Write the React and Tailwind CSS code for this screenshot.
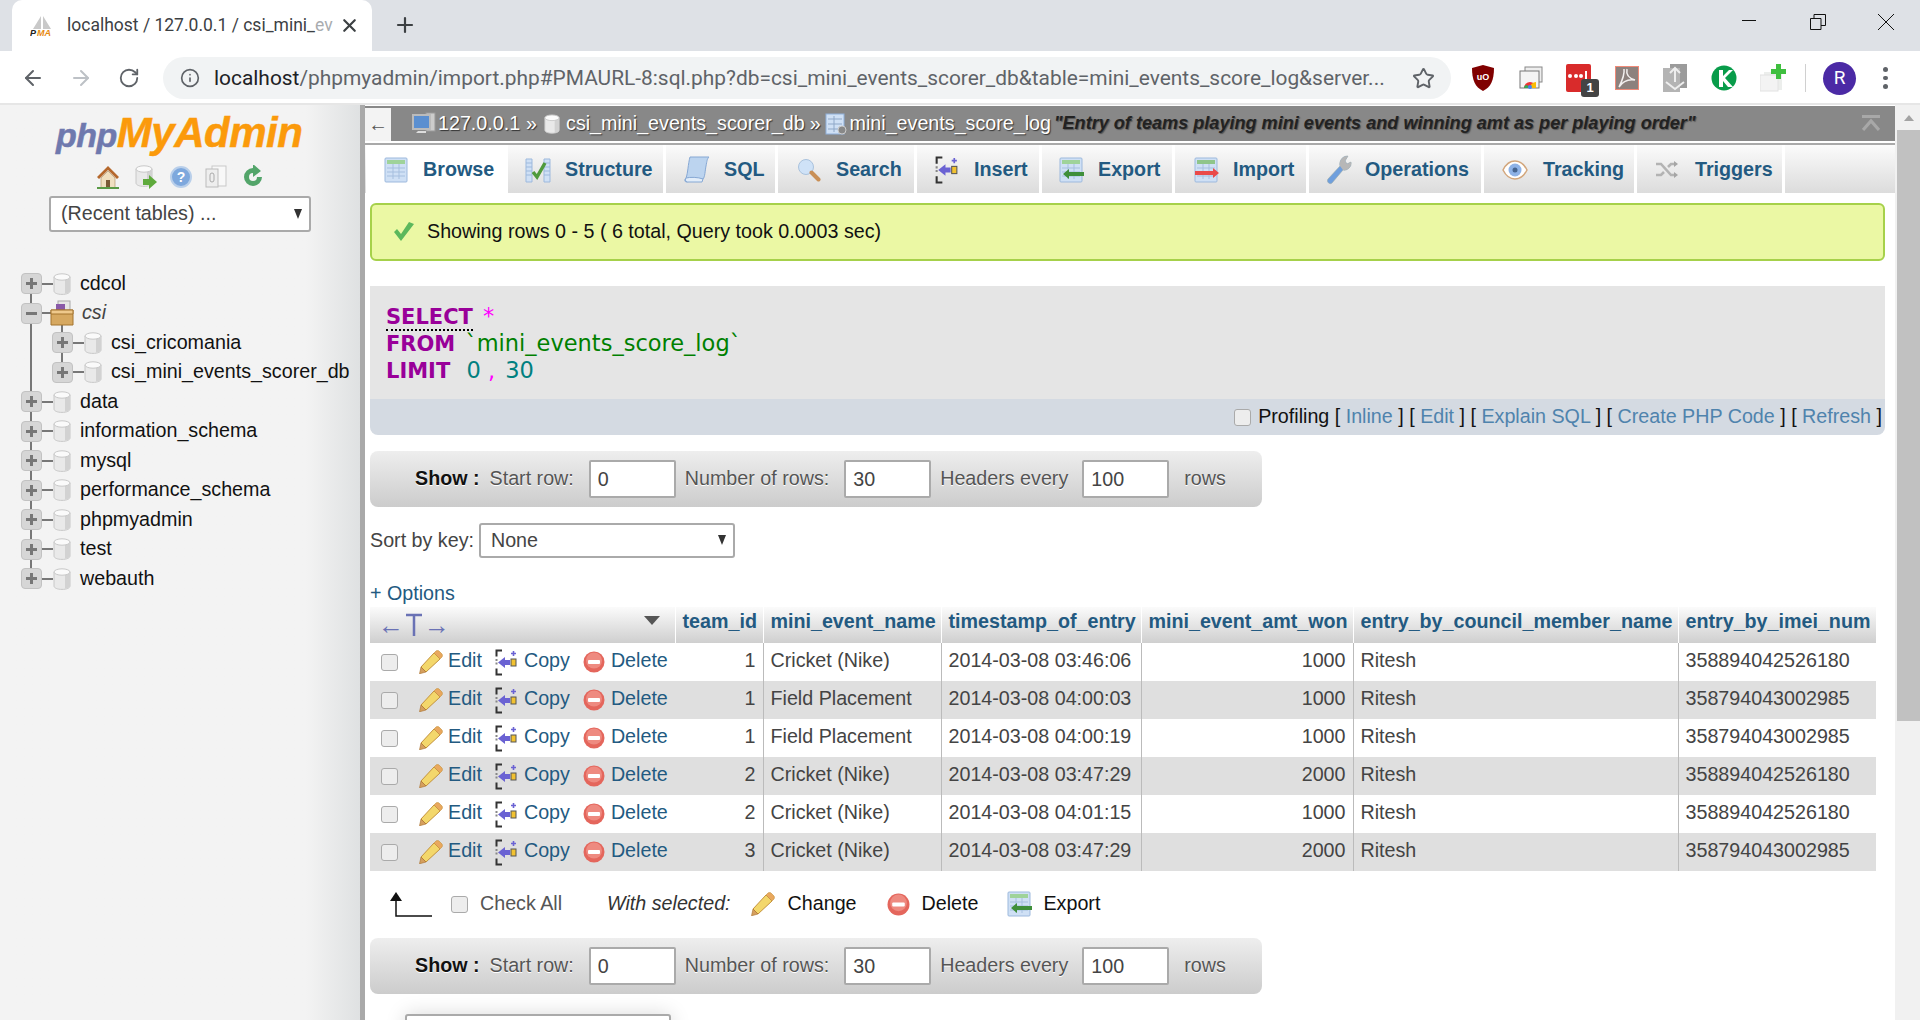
import { ArrowLeft, ArrowRight, RotateCw, Info, Star, X, Plus } from 'lucide-react'

const FONT = "font-['Liberation_Sans',Arial,sans-serif]"

const tabs = [
  { label: 'Browse', w: 'w-[142px]', pl: 'pl-[18px]', gap: 'gap-[13px]', icon: 'table', active: true },
  { label: 'Structure', w: 'w-[158px]', pl: 'pl-[17px]', gap: 'gap-[14px]', icon: 'structure' },
  { label: 'SQL', w: 'w-[112px]', pl: 'pl-[18px]', gap: 'gap-[14px]', icon: 'sql' },
  { label: 'Search', w: 'w-[139px]', pl: 'pl-[19px]', gap: 'gap-[15px]', icon: 'search' },
  { label: 'Insert', w: 'w-[125px]', pl: 'pl-[17px]', gap: 'gap-[15px]', icon: 'insert' },
  { label: 'Export', w: 'w-[133px]', pl: 'pl-[17px]', gap: 'gap-[13px]', icon: 'export' },
  { label: 'Import', w: 'w-[134px]', pl: 'pl-[19px]', gap: 'gap-[13px]', icon: 'import' },
  { label: 'Operations', w: 'w-[175px]', pl: 'pl-[17px]', gap: 'gap-[13px]', icon: 'wrench' },
  { label: 'Tracking', w: 'w-[153px]', pl: 'pl-[18px]', gap: 'gap-[15px]', icon: 'eye' },
  { label: 'Triggers', w: 'w-[148px]', pl: 'pl-[18px]', gap: 'gap-[16px]', icon: 'shuffle' },
]

const databases = [
  { name: 'cdcol' },
  { name: 'csi', open: true },
  { name: 'csi_cricomania', child: true },
  { name: 'csi_mini_events_scorer_db', child: true, last: true },
  { name: 'data' },
  { name: 'information_schema' },
  { name: 'mysql' },
  { name: 'performance_schema' },
  { name: 'phpmyadmin' },
  { name: 'test' },
  { name: 'webauth', end: true },
]

const rows = [
  [1, 'Cricket (Nike)', '2014-03-08 03:46:06', 1000, 'Ritesh', '358894042526180'],
  [1, 'Field Placement', '2014-03-08 04:00:03', 1000, 'Ritesh', '358794043002985'],
  [1, 'Field Placement', '2014-03-08 04:00:19', 1000, 'Ritesh', '358794043002985'],
  [2, 'Cricket (Nike)', '2014-03-08 03:47:29', 2000, 'Ritesh', '358894042526180'],
  [2, 'Cricket (Nike)', '2014-03-08 04:01:15', 1000, 'Ritesh', '358894042526180'],
  [3, 'Cricket (Nike)', '2014-03-08 03:47:29', 2000, 'Ritesh', '358794043002985'],
]

function Db({ className = 'w-[18px] h-[22px]' }) {
  return (
    <svg viewBox="0 0 18 22" className={className}>
      <path d="M1 4v14c0 2 3.5 3.4 8 3.4s8-1.4 8-3.4V4z" fill="#e9e9e9" stroke="#c8c8c8" />
      <path d="M12 6v14.6c3-.4 5-1.4 5-2.6V5z" fill="#d2d2d2" />
      <ellipse cx="9" cy="4" rx="8" ry="3.2" fill="#fafafa" stroke="#c8c8c8" />
    </svg>
  )
}

function Pencil({ className = 'w-[24px] h-[24px]' }) {
  return (
    <svg viewBox="0 0 24 24" className={className}>
      <path d="M2 17 15 3l6 6L7 22z" fill="#f3d76b" stroke="#c4923c" />
      <path d="M15 3l2-2c1-.6 2-.6 3 0l3 3c.6 1 .6 2 0 3l-2 2z" fill="#e9a85e" stroke="#c4923c" strokeWidth=".6" />
      <path d="M2 17l5 5-6.500 1.800z" fill="#d59f5e" stroke="#a86f2b" strokeWidth=".6" />
    </svg>
  )
}

function Insert({ className = 'w-[22px] h-[27px]' }) {
  return (
    <svg viewBox="0 0 22 27" className={className}>
      <path d="M7 1.500H1.500v6M1.500 19.500v6H7" fill="none" stroke="#333" strokeWidth="2" />
      <path d="M1.500 10v7" stroke="#888" strokeWidth="2" strokeDasharray="2 1.500" />
      <path d="M3 13.500 10 8v3h5v5h-5v3z" fill="#6a62d3" />
      <rect x="16" y="10" width="5" height="7" fill="#f2c230" stroke="#555" />
      <path d="M18.500 2v5M16 4.500h5" stroke="#6a62d3" strokeWidth="1.600" />
    </svg>
  )
}

function DeleteIcon({ className = 'w-[22px] h-[22px]' }) {
  return (
    <svg viewBox="0 0 22 22" className={className}>
      <circle cx="11" cy="11" r="10.500" fill="#e4665c" />
      <circle cx="11" cy="9.500" r="8" fill="#ee8a80" />
      <rect x="5" y="9" width="12" height="4" rx="1" fill="#fff" />
    </svg>
  )
}

function TableIcon({ arrow }) {
  return (
    <svg viewBox="0 0 26 26" className="h-[26px] w-[26px] shrink-0">
      <rect x="1" y="1" width="22" height="24" rx="1" fill="#cfe0f5" stroke="#9db9dd" />
      <rect x="3" y="3" width="18" height="4" fill={arrow === 'red' ? '#8fc58a' : '#9fd39a'} />
      <path d="M3 11h18M3 15h18M3 19h18M9 7v15M15 7v15" stroke="#a6bfdf" />
      {arrow === 'green' && <path d="M4 17 10 12v3h15v4H10v3z" fill="#3f8f3a" />}
      {arrow === 'red' && <path d="M1 14h18v-3l6 5-6 5v-3H1z" fill="#ea4a4a" />}
    </svg>
  )
}

function TabIcon({ name }) {
  if (name === 'table') return <TableIcon />
  if (name === 'export') return <TableIcon arrow="green" />
  if (name === 'import') return <TableIcon arrow="red" />
  if (name === 'insert') return <Insert className="h-[28px] w-[25px] shrink-0" />
  if (name === 'structure') {
    return (
      <svg viewBox="0 0 26 26" className="h-[26px] w-[26px] shrink-0">
        <path d="M1 2h6v23H1zM19 2h6v23h-6z" fill="#cfe0f5" stroke="#9db9dd" />
        <path d="M1 6h6M1 10h6M1 14h6M1 18h6M19 6h6M19 10h6M19 14h6M19 18h6" stroke="#9db9dd" />
        <path d="m8 15 4 5 8-14" fill="none" stroke="#4f9a3c" strokeWidth="3.500" />
      </svg>
    )
  }
  if (name === 'sql') {
    return (
      <svg viewBox="0 0 26 28" className="h-[28px] w-[26px] shrink-0">
        <path d="M6 1h19c-2 2-2 4-3 9s-1 11-3 13l-17 3c-2-1-1-3 0-4 2-5 2-14 4-21z" fill="#bcd4ef" stroke="#86a8d4" />
        <path d="M2 22c4-1 12-1 17 1l-1 3H3c-2-1-2-3-1-4z" fill="#e2edf9" stroke="#86a8d4" />
      </svg>
    )
  }
  if (name === 'search') {
    return (
      <svg viewBox="0 0 24 24" className="h-[24px] w-[24px] shrink-0">
        <circle cx="9" cy="9" r="7.500" fill="#cfe2f7" stroke="#a9c2dd" />
        <path d="m14.500 14.500 7 7" stroke="#c98f55" strokeWidth="4" strokeLinecap="round" />
      </svg>
    )
  }
  if (name === 'wrench') {
    return (
      <svg viewBox="0 0 26 30" className="h-[30px] w-[26px] shrink-0">
        <path d="M2 24 14 11c-1-5 2-10 8-10l-3 5 2 3 4-2c1 5-4 9-8 8L6 28c-2 2-6-1-4-4z" fill="#6f9fdd" stroke="#9aa" strokeWidth=".6" />
        <path d="M14 11c-1-5 2-10 8-10l-3 5 2 3 4-2c1 5-4 9-8 8z" fill="#b7b7b7" />
      </svg>
    )
  }
  if (name === 'eye') {
    return (
      <svg viewBox="0 0 26 22" className="h-[22px] w-[26px] shrink-0">
        <path d="M1 11c3-6 7-9 12-9s9 3 12 9c-3 6-7 9-12 9S4 17 1 11z" fill="#fff" stroke="#d2a67c" strokeWidth="1.500" />
        <circle cx="13" cy="11" r="6.500" fill="#8eb2e6" />
        <circle cx="13" cy="11" r="2.500" fill="#45648f" />
      </svg>
    )
  }
  return (
    <svg viewBox="0 0 24 20" className="h-[20px] w-[24px] shrink-0">
      <path d="M1 4h5l10 11h4M1 15h5l3-3M13 7l3-3h4" fill="none" stroke="#b3b3b3" strokeWidth="2.600" />
      <path d="m19 1 4 3-4 3zM19 12l4 3-4 3z" fill="#a5a5a5" />
    </svg>
  )
}

function Check() {
  return <input type="checkbox" className="h-[17px] w-[17px] shrink-0 appearance-none rounded-[3px] border border-[#aaa] bg-[#ededed]" />
}

function TreeToggle({ open }) {
  return (
    <span className="relative z-10 flex h-[21px] w-[21px] shrink-0 items-center justify-center rounded-[4px] border border-[#c2c2c2] bg-[#d6d6d6]">
      <span className="absolute h-[3px] w-[11px] bg-[#777]" />
      {!open && <span className="absolute h-[11px] w-[3px] bg-[#777]" />}
    </span>
  )
}

function TreeRow({ db }) {
  return (
    <li className="relative flex h-[29.5px] items-center text-[19.7px] text-[#111]">
      {!db.end && <span className="absolute left-[30px] top-[14px] h-[30px] w-[2px] bg-[#777]" />}
      {db.child && !db.last && <span className="absolute left-[61px] top-[14px] h-[30px] w-[2px] bg-[#777]" />}
      {db.child && <span className="absolute -top-[14px] left-[61px] h-[20px] w-[2px] bg-[#777]" />}
      <span className={`flex items-center ${db.child ? 'pl-[52px]' : 'pl-[21px]'}`}>
        <TreeToggle open={db.open} />
        <span className="h-[2px] w-[11px] bg-[#777]" />
        {db.open ? (
          <svg viewBox="0 0 24 26" className="z-10 -ml-[3px] h-[26px] w-[24px]">
            <rect x="8" y="1" width="12" height="11" fill="#e6e6e6" stroke="#aaa" />
            <path d="M6 4h9v8H6z" fill="#8a5aa8" />
            <path d="M1 10h22v15H1z" fill="#d6a860" stroke="#a4742f" />
            <path d="M1 10h22v4H1z" fill="#efc98c" stroke="#a4742f" />
          </svg>
        ) : (
          <Db />
        )}
      </span>
      <span className={`${db.open ? 'ml-[8px] italic text-[#444]' : 'ml-[9px]'}`}>{db.name}</span>
    </li>
  )
}

function Sidebar() {
  return (
    <aside className="w-[360px] shrink-0 bg-gradient-to-r from-[#f3f3f3] from-85% to-[#dfe1e2] pt-[5px]">
      <div className={`pl-[56px] text-[42px] font-bold italic leading-[46px] tracking-[-0.5px] [-webkit-text-stroke:0.5px] ${FONT}`}>
        <span className="text-[34px] text-[#6f79ae]">php</span>
        <span className="text-[#fb9a0b]">MyAdmin</span>
      </div>
      <div className="mt-[7px] flex h-[24px] items-center pl-[96px]">
        <svg viewBox="0 0 24 24" className="h-[24px] w-[24px]">
          <path d="M12 1 1 12l2 2L12 5l9 9 2-2z" fill="#b5682c" />
          <path d="M5 13v10h14V13l-7-7z" fill="#f0dfc0" stroke="#a88a5a" strokeWidth=".6" />
          <rect x="10" y="15" width="4" height="8" fill="#7a5a36" />
          <path d="M1 23h22" stroke="#5a9a46" strokeWidth="2" />
        </svg>
        <span className="relative ml-[15px] block h-[24px] w-[22px]">
          <Db className="h-[22px] w-[18px]" />
          <svg viewBox="0 0 14 14" className="absolute bottom-0 right-0 h-[14px] w-[14px]">
            <path d="M0 4h6V0l8 7-8 7v-4H0z" fill="#5eaa3c" />
          </svg>
        </span>
        <svg viewBox="0 0 22 22" className="ml-[13px] h-[22px] w-[22px]">
          <circle cx="11" cy="11" r="10" fill="#7ea8dd" stroke="#b9cfea" strokeWidth="2" />
          <text x="11" y="16" textAnchor="middle" fontSize="14" fontWeight="700" fill="#fff" fontFamily="Liberation Sans">?</text>
        </svg>
        <svg viewBox="0 0 24 24" className="ml-[12px] h-[24px] w-[24px]">
          <rect x="8" y="1" width="14" height="20" fill="#f8f8f8" stroke="#c9c9c9" />
          <rect x="2" y="4" width="12" height="18" fill="#eee" stroke="#bbb" />
          <rect x="6" y="8" width="4" height="9" rx="2" fill="none" stroke="#aaa" />
        </svg>
        <svg viewBox="0 0 22 24" className="ml-[14px] h-[24px] w-[22px]">
          <path d="M11 3a9 9 0 1 0 9 9h-5a4 4 0 1 1-4-4v4l8-6-8-7z" fill="#53a56a" />
        </svg>
      </div>
      <div className="relative ml-[49px] mt-[7px] flex h-[36px] w-[262px] items-center rounded-[3px] border-2 border-[#aaa] bg-white pl-[10px] text-[19.7px] text-[#444]">
        (Recent tables) ...
        <span className="absolute right-[7px] top-[11px] h-0 w-0 border-x-[4.5px] border-t-[10px] border-x-transparent border-t-[#333]" />
      </div>
      <ul className="mt-[37px]">
        {databases.map((db) => <TreeRow key={db.name} db={db} />)}
      </ul>
    </aside>
  )
}

function Extensions() {
  return (
    <div className="ml-[21px] flex items-center">
      <svg viewBox="0 0 22 26" className="h-[26px] w-[22px]">
        <path d="M11 0 22 3c0 12-3 19-11 23C3 22 0 15 0 3z" fill="#800000" />
        <text x="11" y="15" textAnchor="middle" fontSize="9" fontWeight="700" fill="#fff" fontFamily="Liberation Sans">uO</text>
      </svg>
      <svg viewBox="0 0 24 24" className="ml-[25px] h-[24px] w-[24px]">
        <rect x="6" y="1" width="17" height="15" fill="#eee" stroke="#888" />
        <rect x="1" y="5" width="19" height="17" fill="#f4f4f4" stroke="#777" />
        <path d="M5 22a6 6 0 0 1 12 0z" fill="#e33" />
        <path d="M11 22a6 6 0 0 1 6-6v6z" fill="#fbbc05" />
        <path d="M5 22a3 3 0 0 1 3-3l3 3z" fill="#34a853" />
        <circle cx="11" cy="21" r="2" fill="#4285f4" />
      </svg>
      <div className="relative ml-[23px] h-[28px] w-[25px] rounded-[2px] bg-[#d92b2b]">
        <span className="absolute left-[2px] top-[10px] flex gap-[1.500px]">
          <i className="h-[4px] w-[4px] rounded-full bg-white" />
          <i className="h-[4px] w-[4px] rounded-full bg-white" />
          <i className="h-[4px] w-[4px] rounded-full bg-white" />
          <i className="-mt-[3px] h-[9px] w-[2px] bg-white" />
        </span>
        <span className="absolute -right-[8px] top-[15px] flex h-[18px] w-[18px] items-center justify-center rounded-[3px] bg-[#444] text-[13px] font-bold text-white">1</span>
      </div>
      <svg viewBox="0 0 24 24" className="ml-[24px] h-[24px] w-[24px]">
        <rect x=".5" y=".5" width="23" height="23" fill="#8d817d" stroke="#f08a78" />
        <path d="M12 3c-1 5 1 9 8 11-6-1-12 1-16 7 3-6 6-12 5-18" fill="none" stroke="#f3efee" strokeWidth="1.500" />
      </svg>
      <svg viewBox="0 0 24 28" className="ml-[24px] h-[28px] w-[24px]">
        <rect x="7" y="0" width="17" height="24" fill="#9b9b9b" />
        <rect x="0" y="4" width="17" height="24" fill="#b4b4b4" />
        <path d="M12 4v14M7 9l5-5 5 5M3 18l9 7 9-7" fill="none" stroke="#eee" strokeWidth="2" />
      </svg>
      <svg viewBox="0 0 26 26" className="ml-[24px] h-[26px] w-[26px]">
        <circle cx="13" cy="13" r="12.500" fill="#089c4a" />
        <path d="M8 5h4v6l6-6h4l-8 8 8 9h-5l-5-6v6H8z" fill="#fff" />
      </svg>
      <svg viewBox="0 0 26 28" className="ml-[23px] h-[28px] w-[26px]">
        <rect x="4" y="8" width="18" height="18" fill="#eceeec" />
        <rect x="0" y="11" width="18" height="16" fill="#f3f3f3" stroke="#e2e2e2" />
        <path d="M16 0h5v5h5v5h-5v5h-5v-5h-5V5h5z" fill="#3fbf3f" />
      </svg>
      <span className="ml-[19px] h-[28px] w-px bg-[#d0d0d0]" />
      <span className="ml-[17px] flex h-[33px] w-[33px] items-center justify-center rounded-full bg-[#4b2aa5] font-['Roboto',sans-serif] text-[19px] text-white">R</span>
      <span className="ml-[27px] flex flex-col gap-[4px]">
        <i className="h-[4.500px] w-[4.500px] rounded-full bg-[#5f6368]" />
        <i className="h-[4.500px] w-[4.500px] rounded-full bg-[#5f6368]" />
        <i className="h-[4.500px] w-[4.500px] rounded-full bg-[#5f6368]" />
      </span>
    </div>
  )
}

function BrowserChrome() {
  return (
    <header className="shrink-0">
      <div className="flex h-[51px] bg-[#dee1e6]">
        <div className="ml-[12px] flex h-[51px] w-[360px] items-center rounded-t-[10px] bg-white pl-[18px]">
          <svg viewBox="0 0 24 22" className="h-[22px] w-[24px] shrink-0">
            <path d="M11 1 3 14h8zM13 1l8 13h-8z" fill="#c9c9c9" />
            <text x="0" y="21" fontSize="9" fontWeight="700" fontStyle="italic" fill="#222" fontFamily="Liberation Sans">P</text>
            <text x="7" y="21" fontSize="9" fontWeight="700" fontStyle="italic" fill="#e88a10" fontFamily="Liberation Sans">MA</text>
          </svg>
          <span className="ml-[13px] w-[264px] whitespace-nowrap font-['Roboto',sans-serif] text-[17.5px] text-[#3c4043]">localhost / 127.0.0.1 / csi_mini_<span className="text-[#a9acaf]">ev</span></span>
          <X size={21} strokeWidth={2.500} className="ml-[8px] text-[#3c4043]" />
        </div>
        <Plus size={24} strokeWidth={2.200} className="ml-[21px] mt-[13px] text-[#3c4043]" />
        <div className="ml-auto flex">
          <svg viewBox="0 0 14 14" className="mr-[54px] mt-[14px] h-[14px] w-[14px]"><path d="M0 6.500h14" stroke="#111" /></svg>
          <svg viewBox="0 0 16 16" className="mr-[52px] mt-[14px] h-[16px] w-[16px]"><path d="M.5 4.500h10.500v11H.5zM4 4.500V.5h11.500v11h-4.500" fill="none" stroke="#111" /></svg>
          <svg viewBox="0 0 16 16" className="mr-[26px] mt-[14px] h-[16px] w-[16px]"><path d="m0 0 16 16M16 0 0 16" stroke="#111" /></svg>
        </div>
      </div>
      <div className="flex h-[54px] items-center border-b-2 border-[#e6e6e6] bg-white pt-[2px]">
        <ArrowLeft size={24} strokeWidth={2} className="ml-[21px] text-[#5f6368]" />
        <ArrowRight size={24} strokeWidth={2} className="ml-[24px] text-[#bdc1c6]" />
        <RotateCw size={22} strokeWidth={2} className="ml-[25px] text-[#5f6368]" />
        <div className="ml-[23px] flex h-[42px] w-[1288px] items-center rounded-full bg-[#f1f3f4] pl-[17px] font-['Roboto',sans-serif]">
          <Info size={20} strokeWidth={2} className="shrink-0 text-[#5f6368]" />
          <span className="ml-[14px] mt-[1px] w-[1172px] whitespace-nowrap text-[20.9px] text-[#5f6368]">
            <span className="text-[#202124]">localhost</span>/phpmyadmin/import.php#PMAURL-8:sql.php?db=csi_mini_events_scorer_db&amp;table=mini_events_score_log&amp;server...
          </span>
          <Star size={23} strokeWidth={2} className="ml-[26px] shrink-0 text-[#5f6368]" />
        </div>
        <Extensions />
      </div>
    </header>
  )
}

function Crumbs() {
  return (
    <div className="mt-[1px] flex h-[35px] items-center bg-[#888] text-[19.7px] text-white [text-shadow:1px_1px_1px_#333]">
      <span className="flex h-[33px] w-[26px] shrink-0 items-center justify-center self-end bg-[#f3f3f3] text-[#555] [text-shadow:none]">←</span>
      <svg viewBox="0 0 24 24" className="ml-[21px] h-[24px] w-[24px] shrink-0">
        <rect x="14" y="1" width="9" height="18" fill="#ccc" stroke="#999" />
        <rect x="1" y="3" width="17" height="14" fill="#5b8fd0" stroke="#bbb" strokeWidth="2" />
        <path d="M6 19h8v2H4z" fill="#ddd" />
      </svg>
      <span className="ml-[2px]">127.0.0.1</span>
      <span className="ml-[6px]">»</span>
      <Db className="ml-[7px] h-[20px] w-[16px] shrink-0" />
      <span className="ml-[6px]">csi_mini_events_scorer_db</span>
      <span className="ml-[5px]">»</span>
      <svg viewBox="0 0 22 22" className="ml-[4px] h-[22px] w-[22px] shrink-0">
        <rect x="1" y="1" width="18" height="20" fill="#cfe0f5" stroke="#8fb0da" />
        <path d="M3 6h14M3 11h14M3 16h14M9 3v16" stroke="#8fa8c8" />
        <circle cx="17" cy="17" r="4" fill="#888" stroke="#ccc" />
      </svg>
      <span className="ml-[3px]">mini_events_score_log</span>
      <span className="ml-[3px] text-[18.1px] font-bold italic text-[#222] [text-shadow:1px_1px_1px_#555]">"Entry of teams playing mini events and winning amt as per playing order"</span>
      <svg viewBox="0 0 18 18" className="ml-auto mr-[15px] h-[18px] w-[18px]">
        <path d="M0 1.500h18M1 15 9 6l8 9" fill="none" stroke="#a8a8a8" strokeWidth="3.200" />
      </svg>
    </div>
  )
}

function Tabs() {
  return (
    <nav className="flex h-[48px] bg-gradient-to-b from-[#fbfbfb] to-[#dcdcdc] pl-[1px]">
      {tabs.map((tab) => (
        <a
          key={tab.label}
          className={`flex shrink-0 items-center border-r-[3px] border-white pt-[1px] text-[19.7px] font-bold text-[#235a81] ${tab.w} ${tab.pl} ${tab.gap} ${tab.active ? 'bg-white' : ''}`}
        >
          <TabIcon name={tab.icon} />
          {tab.label}
        </a>
      ))}
    </nav>
  )
}

function ShowBar() {
  const input = 'h-[38px] w-[87px] rounded-[2px] border-2 border-[#aaa] bg-white px-[7px] text-[19.7px] text-[#444]'
  return (
    <form className="flex h-[56px] w-[892px] items-center rounded-[8px] bg-gradient-to-b from-[#eeeeee] to-[#cccccc] pl-[45px] text-[19.7px] text-[#555] [text-shadow:0_1px_0_#fff]">
      <b className="text-[#111]">Show :</b>
      <span className="ml-[10px]">Start row:</span>
      <input className={`ml-[15px] ${input}`} defaultValue="0" />
      <span className="ml-[9px]">Number of rows:</span>
      <input className={`ml-[15px] ${input}`} defaultValue="30" />
      <span className="ml-[9px]">Headers every</span>
      <input className={`ml-[14px] ${input}`} defaultValue="100" />
      <span className="ml-[15px]">rows</span>
    </form>
  )
}

function ResultTable() {
  const th = 'border-l border-white px-[7px] pb-[6px] text-left font-bold'
  const td = 'border-l border-[#bbb] px-[7px] pb-[3px] whitespace-nowrap'
  return (
    <table className="w-[1506px] table-fixed border-collapse text-[19.7px] text-[#444]">
      <colgroup>
        <col className="w-[305px]" />
        <col className="w-[88px]" />
        <col className="w-[178px]" />
        <col className="w-[200px]" />
        <col className="w-[212px]" />
        <col className="w-[325px]" />
        <col className="w-[198px]" />
      </colgroup>
      <thead>
        <tr className="h-[36px] bg-gradient-to-b from-[#fbfbfb] to-[#cfcfcf] text-[#235a81]">
          <th className="relative">
            <span className="flex items-center pl-[8px] text-[#6a72b5]">
              <span className="text-[26px] font-normal leading-none">←</span>
              <svg viewBox="0 0 20 24" className="h-[24px] w-[20px]"><path d="M2 2h16M10 2v21" stroke="#6a72b5" strokeWidth="2.500" fill="none" /></svg>
              <span className="text-[26px] font-normal leading-none">→</span>
            </span>
            <span className="absolute right-[15px] top-[9px] h-0 w-0 border-x-[8px] border-t-[9px] border-x-transparent border-t-[#555]" />
          </th>
          <th className={th}>team_id</th>
          <th className={th}>mini_event_name</th>
          <th className={th}>timestamp_of_entry</th>
          <th className={th}>mini_event_amt_won</th>
          <th className={th}>entry_by_council_member_name</th>
          <th className={th}>entry_by_imei_num</th>
        </tr>
      </thead>
      <tbody>
        {rows.map((row, i) => (
          <tr key={i} className={`h-[38px] ${i % 2 ? 'bg-[#dfdfdf]' : 'bg-white'}`}>
            <td>
              <span className="flex items-center pl-[11px] text-[#235a81]">
                <Check />
                <Pencil className="ml-[21px] h-[24px] w-[24px]" />
                <a className="-mt-[3px] ml-[5px]">Edit</a>
                <Insert className="ml-[13px] h-[27px] w-[22px]" />
                <a className="-mt-[3px] ml-[7px]">Copy</a>
                <DeleteIcon className="ml-[13px] h-[22px] w-[22px]" />
                <a className="-mt-[3px] ml-[6px]">Delete</a>
              </span>
            </td>
            <td className="px-[7px] pb-[3px] text-right">{row[0]}</td>
            <td className={td}>{row[1]}</td>
            <td className={td}>{row[2]}</td>
            <td className={`${td} text-right`}>{row[3]}</td>
            <td className={td}>{row[4]}</td>
            <td className={td}>{row[5]}</td>
          </tr>
        ))}
      </tbody>
    </table>
  )
}

function BulkActions() {
  return (
    <div className="mt-[16px] flex h-[34px] items-center pl-[20px] text-[19.7px] text-[#111]">
      <svg viewBox="0 0 42 26" className="h-[26px] w-[42px]">
        <path d="M6 10v15h36" fill="none" stroke="#111" strokeWidth="1.500" />
        <path d="M6 1l6 9H0z" fill="#111" />
      </svg>
      <span className="ml-[19px] flex"><Check /></span>
      <span className="ml-[12px] text-[#555]">Check All</span>
      <i className="ml-[45px] text-[#333]">With selected:</i>
      <Pencil className="ml-[20px] h-[24px] w-[24px]" />
      <span className="ml-[13px]">Change</span>
      <DeleteIcon className="ml-[30px] h-[23px] w-[23px]" />
      <span className="ml-[12px]">Delete</span>
      <span className="ml-[29px] flex"><TableIcon arrow="green" /></span>
      <span className="ml-[10px]">Export</span>
    </div>
  )
}

function Content() {
  return (
    <main className="min-w-0 flex-1 overflow-hidden">
      <Crumbs />
      <div className="mt-[2px] h-[2px] bg-[#a9a9a9]" />
      <Tabs />
      <div className="pl-[5px] pr-[10px] pt-[10px] text-[19.7px]">
        <div className="flex h-[58px] items-center rounded-[6px] border-2 border-[#a6d14a] bg-[#ebf8a4] pl-[20px] text-[#111]">
          <svg viewBox="0 0 24 22" className="h-[22px] w-[24px]">
            <path d="M2 11 9 20 22 3 17 1 9 13 5 8z" fill="#5cb85c" />
          </svg>
          <span className="ml-[11px]">Showing rows 0 - 5 ( 6 total, Query took 0.0003 sec)</span>
        </div>
        <div className="mt-[25px] h-[113px] bg-[#e5e5e5] pl-[16px] pt-[17px] font-['DejaVu_Sans',sans-serif] text-[22.5px]">
          <div className="h-[27px] leading-[27px]"><b className="border-b-2 border-dotted border-black text-[21px] text-[#990099]">SELECT</b> <span className="ml-[3px] text-[#ff00ff]">*</span></div>
          <div className="h-[27px] leading-[27px]"><b className="text-[21px] text-[#990099]">FROM</b> <span className="ml-[3px] text-[#008000]">`mini_events_score_log`</span></div>
          <div className="h-[27px] leading-[27px]"><b className="text-[21px] text-[#990099]">LIMIT</b> <span className="ml-[9px] text-[#008080]">0</span> <span className="text-[#ff00ff]">,</span> <span className="ml-[3px] text-[#008080]">30</span></div>
        </div>
        <div className="flex h-[36px] items-center justify-end rounded-b-[8px] bg-[#d4dae2] pr-[3px] text-[#111]">
          <Check />
          <span className="ml-[7px]">Profiling [ <a className="text-[#4f83ad]">Inline</a> ] [ <a className="text-[#4f83ad]">Edit</a> ] [ <a className="text-[#4f83ad]">Explain SQL</a> ] [ <a className="text-[#4f83ad]">Create PHP Code</a> ] [ <a className="text-[#4f83ad]">Refresh</a> ]</span>
        </div>
        <div className="mt-[16px]"><ShowBar /></div>
        <div className="mt-[16px] flex items-center text-[#444]">
          Sort by key:
          <div className="relative ml-[5px] flex h-[35px] w-[256px] items-center rounded-[3px] border-2 border-[#aaa] bg-white pl-[10px]">
            None
            <span className="absolute right-[7px] top-[10px] h-0 w-0 border-x-[4.5px] border-t-[10px] border-x-transparent border-t-[#333]" />
          </div>
        </div>
        <a className="mt-[24px] block leading-[23px] text-[#235a81]">+ Options</a>
        <div className="mt-[2px]"><ResultTable /></div>
        <BulkActions />
        <div className="mt-[17px]"><ShowBar /></div>
        <div className="ml-[35px] mt-[20px] h-[40px] w-[266px] rounded-[3px] border-2 border-[#aaa] bg-white shadow-[0_0_20px_rgba(0,0,0,0.15)]" />
      </div>
    </main>
  )
}

function Scrollbar() {
  return (
    <div className="flex w-[25px] shrink-0 flex-col bg-[#f1f1f1] pl-[2px]">
      <div className="flex h-[25px] items-center justify-center">
        <span className="h-0 w-0 border-x-[5px] border-b-[6px] border-x-transparent border-b-[#a3a3a3]" />
      </div>
      <div className="h-[591px] bg-[#c1c1c1]" />
    </div>
  )
}

export default function App() {
  return (
    <div className={`flex h-[1020px] w-[1920px] flex-col overflow-hidden bg-white ${FONT}`}>
      <BrowserChrome />
      <div className="flex min-h-0 flex-1">
        <Sidebar />
        <div className="w-[5px] shrink-0 bg-[#a9a9a9]" />
        <Content />
        <Scrollbar />
      </div>
    </div>
  )
}
